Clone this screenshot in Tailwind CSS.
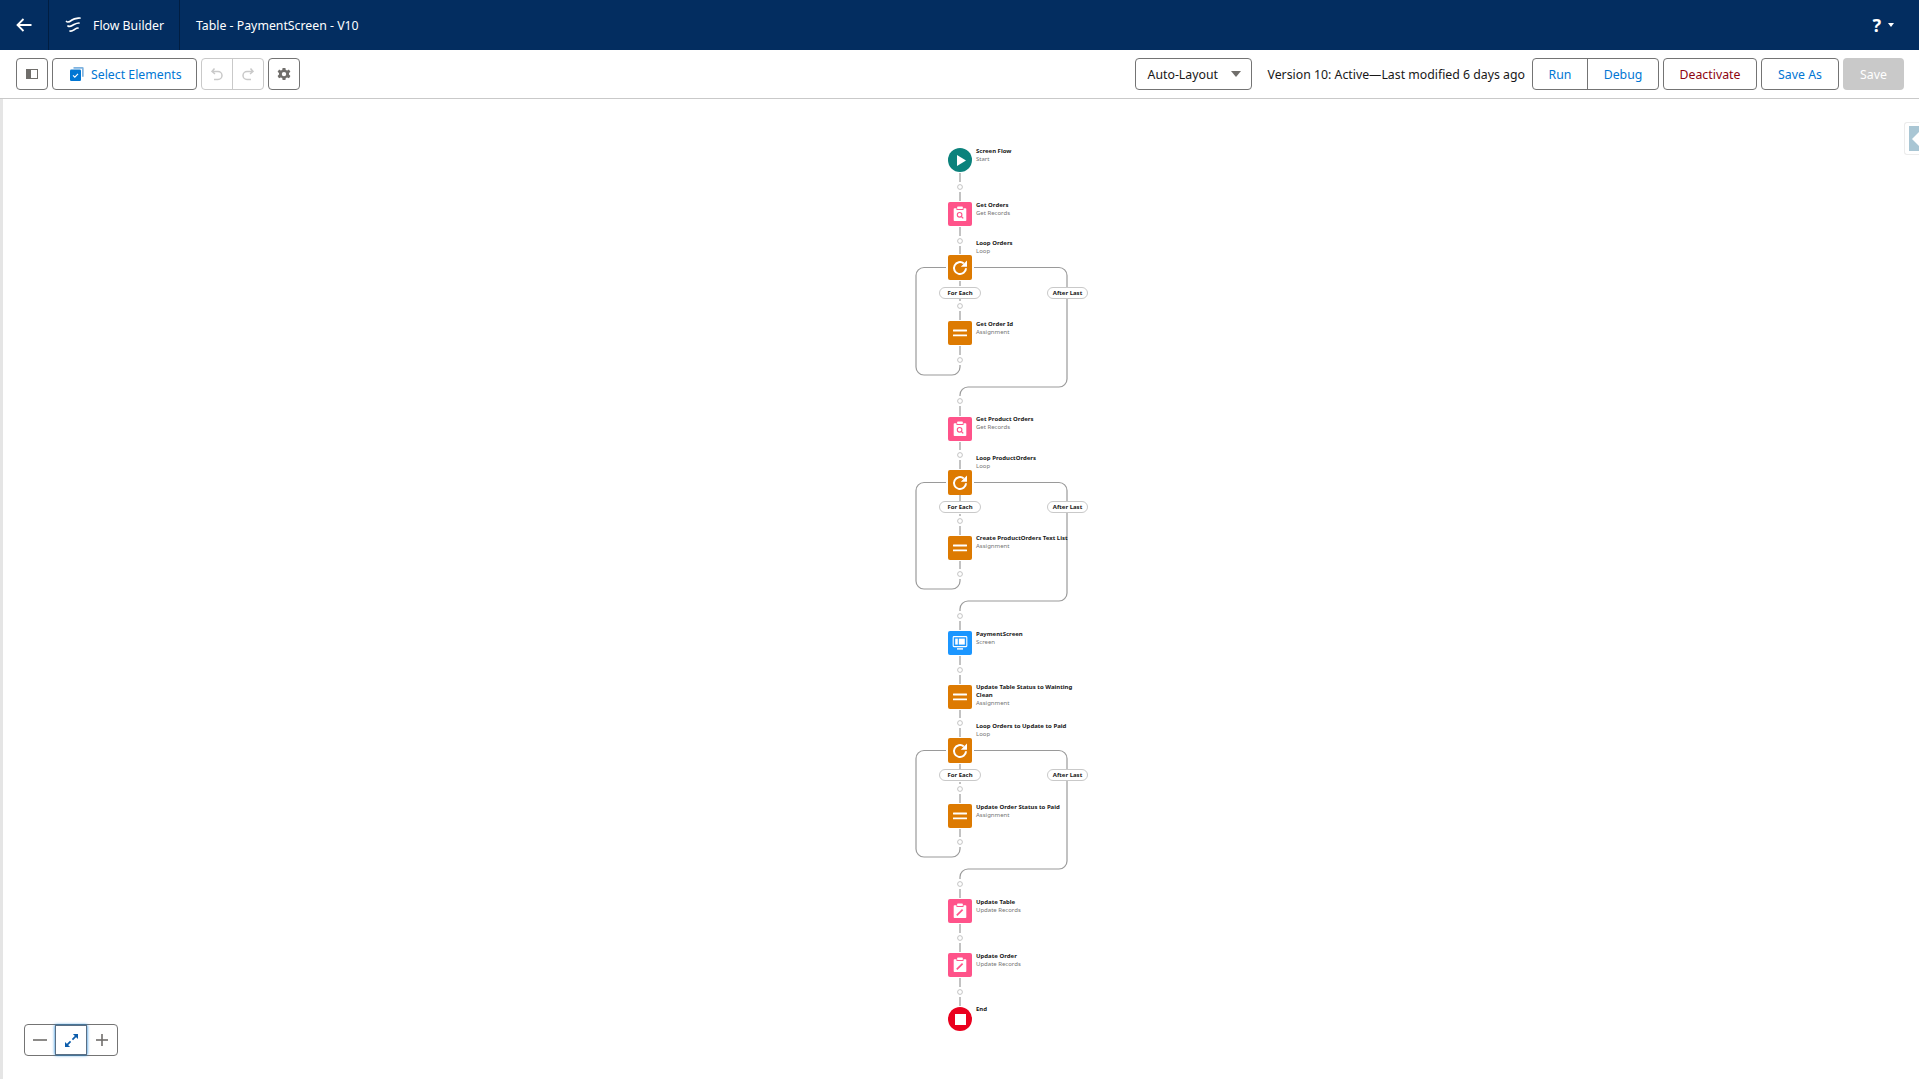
<!DOCTYPE html>
<html lang="en">

<head>
    <meta charset="UTF-8">
    <title>Flow Builder</title>
    <script src="https://cdn.jsdelivr.net/npm/@tailwindcss/browser@4"></script>
</head>

<body class="relative h-screen overflow-hidden bg-white font-['Noto_Sans',sans-serif] text-[12.3px] text-[#181818]">

    <!-- shared node icons -->
    <svg class="hidden">
        <symbol id="i-get" viewBox="0 0 16 16">
            <path fill="#fff" d="M2.5 2.2h2v1.8h7V2.200h2a.8.8 0 0 1 .8.8v11.200a.8.8 0 0 1-.8.8h-11a.8.8 0 0 1-.8-.8V3a.8.8 0 0 1 .8-.8z" />
            <rect fill="#fff" x="5.200" y=".6" width="5.600" height="2.500" rx=".6" />
            <circle cx="7.600" cy="8.800" r="2.300" fill="none" stroke="#ff538a" stroke-width="1.100" />
            <path stroke="#ff538a" stroke-width="1.300" d="M9.200 10.400l2 2" />
        </symbol>
        <symbol id="i-update" viewBox="0 0 16 16">
            <path fill="#fff" d="M2.5 2.2h2v1.8h7V2.200h2a.8.8 0 0 1 .8.8v11.200a.8.8 0 0 1-.8.8h-11a.8.8 0 0 1-.8-.8V3a.8.8 0 0 1 .8-.8z" />
            <rect fill="#fff" x="5.200" y=".6" width="5.600" height="2.500" rx=".6" />
            <path stroke="#ff538a" stroke-width="1.700" d="M4.800 12.400l5.800-5.800" />
        </symbol>
        <symbol id="i-loop" viewBox="0 0 16 16">
            <path fill="none" stroke="#fff" stroke-width="2" d="M14 8.200a6 6 0 1 1-2.200-4.800" />
            <path fill="#fff" d="M15 .6v6.200H8.800z" />
        </symbol>
        <symbol id="i-assign" viewBox="0 0 16 16">
            <rect fill="#fff" x="1" y="4.600" width="14" height="1.800" rx=".3" />
            <rect fill="#fff" x="1" y="9.400" width="14" height="1.800" rx=".3" />
        </symbol>
        <symbol id="i-screen" viewBox="0 0 16 16">
            <rect x="1.200" y="1.600" width="13.600" height="10" rx=".8" fill="none" stroke="#fff" stroke-width="1.100" />
            <rect x="3.200" y="3.600" width="2.600" height="6" fill="#fff" />
            <rect x="6.800" y="3.600" width="6" height="6" fill="#fff" />
            <rect x="5" y="13.200" width="6" height="1.400" fill="#fff" />
        </symbol>
    </svg>

    <!-- app header -->
    <header class="flex h-[50px] items-center bg-[#032d60] text-white">
        <div class="flex h-full w-[49px] items-center justify-center border-r border-[#011e42]">
            <svg class="h-[16px] w-[16px]" viewBox="0 0 16 16" fill="none" stroke="#fff" stroke-width="1.800">
                <path d="M15.500 8H1.500M7.500 2L1.500 8l6 6" />
            </svg>
        </div>
        <div class="flex h-full w-[131px] items-center border-r border-[#011e42] pl-[16px]">
            <svg class="h-[16px] w-[16px]" viewBox="0 0 16 16" fill="none" stroke="#fff" stroke-width="1.700" stroke-linecap="round">
                <path d="M1.500 4.500C3 6 5 4.500 7 3s4-1.500 8-2M3 9c2 1.500 4-.5 6-1.500s3-1.500 5-1.500M5 14c2 .5 3-.5 4.500-1.500s2-1.500 3.500-1.500" />
            </svg>
            <span class="ml-[12px] pt-[2px]">Flow Builder</span>
        </div>
        <div class="pl-[16px] pt-[2px]">Table - PaymentScreen - V10</div>
        <div class="ml-auto flex items-center pr-[25px]">
            <span class="text-[18px] font-bold">?</span>
            <span class="ml-[7px] h-0 w-0 border-x-[3.5px] border-t-[4px] border-x-transparent border-t-white"></span>
        </div>
    </header>

    <!-- toolbar -->
    <div class="flex h-[49px] items-center border-b border-[#c9c9c9] pl-[16px] pr-[15px]">
        <button class="flex h-[32px] w-[32px] items-center justify-center rounded-[4px] border border-[#747474]">
            <svg class="h-[12px] w-[12px]" viewBox="0 0 12 12">
                <rect x=".5" y="1.500" width="11" height="9" fill="none" stroke="#706e6b" />
                <rect x="1" y="2" width="4" height="8" fill="#706e6b" />
            </svg>
        </button>
        <button class="ml-[4px] flex h-[32px] w-[145px] items-center rounded-[4px] border border-[#747474] pl-[17px] text-[#0176d3]">
            <svg class="h-[14px] w-[14px]" viewBox="0 0 14 14">
                <path fill="#7fb3e0" d="M3.500 0h9a1.200 1.200 0 0 1 1.200 1.200v8.500H12V1.800H3.500z" />
                <rect y="2.600" width="11" height="11.400" rx="1.200" fill="#0176d3" />
                <path d="M3 8.400l1.800 1.800L8 6.800" fill="none" stroke="#fff" stroke-width="1.100" />
            </svg>
            <span class="ml-[7px] pt-[2px]">Select Elements</span>
        </button>
        <div class="ml-[4px] flex h-[32px] w-[63px] rounded-[4px] border border-[#c9c9c9]">
            <div class="flex w-[31px] items-center justify-center border-r border-[#c9c9c9]">
                <svg class="h-[14px] w-[14px]" viewBox="0 0 14 14" fill="none" stroke="#c9c9c9" stroke-width="1.500">
                    <path d="M4.500 1.500L2 4.500l3 2.500M2.500 4.500h5.500a4 4 0 0 1 0 8H4" />
                </svg>
            </div>
            <div class="flex flex-1 items-center justify-center">
                <svg class="h-[14px] w-[14px]" viewBox="0 0 14 14" fill="none" stroke="#c9c9c9" stroke-width="1.500">
                    <path d="M9.500 1.500l2.500 3-3 2.500M11.500 4.500H6a4 4 0 0 0 0 8h4" />
                </svg>
            </div>
        </div>
        <button class="ml-[4px] flex h-[32px] w-[32px] items-center justify-center rounded-[4px] border border-[#747474]">
            <svg class="h-[14px] w-[14px]" viewBox="0 0 14 14">
                <path fill="#706e6b" fill-rule="evenodd" d="M5.600 0h2.800l.4 1.900 1.400.6 1.700-1 1.500 2.200-1.400 1.300v1.600L13.400 8 12 10.300l-1.800-.9-1.400.7-.4 1.900H5.600l-.4-1.900-1.400-.7-1.800.9L.6 8 2 6.600V5L.6 3.700 2.100 1.500l1.700 1 1.400-.6zM7 3.900a2.200 2.200 0 1 0 0 4.400 2.200 2.200 0 0 0 0-4.400z" transform="translate(0 1)" />
            </svg>
        </button>

        <button class="ml-auto flex h-[32px] w-[117px] items-center rounded-[4px] border border-[#747474] pl-[12px]">
            <span class="pt-[2px]">Auto-Layout</span>
            <span class="ml-[13px] h-0 w-0 border-x-[5px] border-t-[6px] border-x-transparent border-t-[#706e6b]"></span>
        </button>
        <span class="ml-[16px] pt-[2px]">Version 10: Active—Last modified 6 days ago</span>
        <div class="ml-[7px] flex h-[32px] w-[127px] rounded-[4px] border border-[#747474] text-[#0176d3]">
            <div class="flex w-[55px] items-center justify-center border-r border-[#747474] pt-[2px]">Run</div>
            <div class="flex flex-1 items-center justify-center pt-[2px]">Debug</div>
        </div>
        <button class="ml-[4px] h-[32px] w-[94px] rounded-[4px] border border-[#747474] pt-[2px] text-[#8e030f]">Deactivate</button>
        <button class="ml-[4px] h-[32px] w-[78px] rounded-[4px] border border-[#747474] pt-[2px] text-[#0176d3]">Save As</button>
        <button class="ml-[4px] h-[32px] w-[61px] rounded-[4px] bg-[#c9c9c9] pt-[2px] text-white">Save</button>
    </div>

    <!-- free canvas: everything below is placed in page coordinates -->
    <div class="absolute inset-0">
        <div class="absolute bottom-0 left-0 top-[99px] w-[3px] bg-[#e5e5e5]"></div>

        <svg class="absolute left-0 top-0 h-[1079px] w-[1919px]" viewBox="0 0 1919 1079" fill="none">
            <g stroke="#c2c2c2" stroke-width="2">
                <path d="M960 173v9M960 192v9" />
                <path d="M960 227v9M960 246v8" />
                <path d="M960 281v5M960 299v2M960 311v9" />
                <path d="M960 346v9" />
                <path d="M960 406v10" />
                <path d="M960 442v8M960 460v9" />
                <path d="M960 495v6M960 514v2M960 526v9" />
                <path d="M960 561v8" />
                <path d="M960 621v9" />
                <path d="M960 656v9M960 675v9" />
                <path d="M960 710v8M960 728v9" />
                <path d="M960 764v5M960 782v2M960 794v9" />
                <path d="M960 829v8" />
                <path d="M960 889v9" />
                <path d="M960 924v9M960 943v9" />
                <path d="M960 978v9M960 997v9" />
            </g>
            <g stroke="#9a9a9a" stroke-width="1.200">
                <path d="M946 267.500h-22a8 8 0 0 0-8 8V367a8 8 0 0 0 8 8h28a8 8 0 0 0 8-8v-2" />
                <path d="M974 267.500h85a8 8 0 0 1 8 8V379a8 8 0 0 1-8 8h-91a8 8 0 0 0-8 8v1" />
                <path d="M946 482.500h-22a8 8 0 0 0-8 8V581a8 8 0 0 0 8 8h28a8 8 0 0 0 8-8v-2" />
                <path d="M974 482.500h85a8 8 0 0 1 8 8V593a8 8 0 0 1-8 8h-91a8 8 0 0 0-8 8v2" />
                <path d="M946 750.500h-22a8 8 0 0 0-8 8V849a8 8 0 0 0 8 8h28a8 8 0 0 0 8-8v-2" />
                <path d="M974 750.500h85a8 8 0 0 1 8 8V861a8 8 0 0 1-8 8h-91a8 8 0 0 0-8 8v2" />
            </g>
            <!-- connector dots -->
            <g fill="#fff" stroke="#b5b5b5" stroke-width=".8">
                <circle cx="960" cy="187" r="2.400" />
                <circle cx="960" cy="241" r="2.400" />
                <circle cx="960" cy="306" r="2.400" />
                <circle cx="960" cy="360" r="2.400" />
                <circle cx="960" cy="401" r="2.400" />
                <circle cx="960" cy="455" r="2.400" />
                <circle cx="960" cy="521" r="2.400" />
                <circle cx="960" cy="574" r="2.400" />
                <circle cx="960" cy="616" r="2.400" />
                <circle cx="960" cy="670" r="2.400" />
                <circle cx="960" cy="723" r="2.400" />
                <circle cx="960" cy="789" r="2.400" />
                <circle cx="960" cy="842" r="2.400" />
                <circle cx="960" cy="884" r="2.400" />
                <circle cx="960" cy="938" r="2.400" />
                <circle cx="960" cy="992" r="2.400" />
            </g>
        </svg>

        <!-- nodes -->
        <div class="absolute left-[948px] top-[148px] flex h-[24px] w-[24px] items-center justify-center rounded-full bg-[#0b827c]">
            <svg class="ml-[2px] h-[11px] w-[9px]" viewBox="0 0 9 11"><path fill="#fff" d="M0 0l9 5.500-9 5.500z" /></svg>
        </div>
        <div class="absolute left-[948px] top-[202px] flex h-[24px] w-[24px] items-center justify-center rounded-[2px] bg-[#ff538a]"><svg class="h-[16px] w-[16px]"><use href="#i-get" /></svg></div>
        <div class="absolute left-[948px] top-[255px] flex h-[25px] w-[24px] items-center justify-center rounded-[2px] bg-[#dd7a01]"><svg class="h-[16px] w-[16px]"><use href="#i-loop" /></svg></div>
        <div class="absolute left-[948px] top-[321px] flex h-[24px] w-[24px] items-center justify-center rounded-[2px] bg-[#dd7a01]"><svg class="h-[16px] w-[16px]"><use href="#i-assign" /></svg></div>
        <div class="absolute left-[948px] top-[417px] flex h-[24px] w-[24px] items-center justify-center rounded-[2px] bg-[#ff538a]"><svg class="h-[16px] w-[16px]"><use href="#i-get" /></svg></div>
        <div class="absolute left-[948px] top-[470px] flex h-[25px] w-[24px] items-center justify-center rounded-[2px] bg-[#dd7a01]"><svg class="h-[16px] w-[16px]"><use href="#i-loop" /></svg></div>
        <div class="absolute left-[948px] top-[536px] flex h-[24px] w-[24px] items-center justify-center rounded-[2px] bg-[#dd7a01]"><svg class="h-[16px] w-[16px]"><use href="#i-assign" /></svg></div>
        <div class="absolute left-[948px] top-[631px] flex h-[24px] w-[24px] items-center justify-center rounded-[2px] bg-[#1b96ff]"><svg class="h-[16px] w-[16px]"><use href="#i-screen" /></svg></div>
        <div class="absolute left-[948px] top-[685px] flex h-[24px] w-[24px] items-center justify-center rounded-[2px] bg-[#dd7a01]"><svg class="h-[16px] w-[16px]"><use href="#i-assign" /></svg></div>
        <div class="absolute left-[948px] top-[738px] flex h-[25px] w-[24px] items-center justify-center rounded-[2px] bg-[#dd7a01]"><svg class="h-[16px] w-[16px]"><use href="#i-loop" /></svg></div>
        <div class="absolute left-[948px] top-[804px] flex h-[24px] w-[24px] items-center justify-center rounded-[2px] bg-[#dd7a01]"><svg class="h-[16px] w-[16px]"><use href="#i-assign" /></svg></div>
        <div class="absolute left-[948px] top-[899px] flex h-[24px] w-[24px] items-center justify-center rounded-[2px] bg-[#ff538a]"><svg class="h-[16px] w-[16px]"><use href="#i-update" /></svg></div>
        <div class="absolute left-[948px] top-[953px] flex h-[24px] w-[24px] items-center justify-center rounded-[2px] bg-[#ff538a]"><svg class="h-[16px] w-[16px]"><use href="#i-update" /></svg></div>
        <div class="absolute left-[948px] top-[1007px] flex h-[24px] w-[24px] items-center justify-center rounded-full bg-[#ea001e]"><div class="h-[11px] w-[11px] bg-white"></div></div>

        <!-- node labels -->
        <div class="absolute left-[976px] top-[147px] text-[6px] leading-[8px]"><div class="font-bold">Screen Flow</div><div class="text-[#747474]">Start</div></div>
        <div class="absolute left-[976px] top-[201px] text-[6px] leading-[8px]"><div class="font-bold">Get Orders</div><div class="text-[#747474]">Get Records</div></div>
        <div class="absolute left-[976px] top-[239px] text-[6px] leading-[8px]"><div class="font-bold">Loop Orders</div><div class="text-[#747474]">Loop</div></div>
        <div class="absolute left-[976px] top-[320px] text-[6px] leading-[8px]"><div class="font-bold">Get Order Id</div><div class="text-[#747474]">Assignment</div></div>
        <div class="absolute left-[976px] top-[415px] text-[6px] leading-[8px]"><div class="font-bold">Get Product Orders</div><div class="text-[#747474]">Get Records</div></div>
        <div class="absolute left-[976px] top-[454px] text-[6px] leading-[8px]"><div class="font-bold">Loop ProductOrders</div><div class="text-[#747474]">Loop</div></div>
        <div class="absolute left-[976px] top-[534px] text-[6px] leading-[8px]"><div class="font-bold">Create ProductOrders Text List</div><div class="text-[#747474]">Assignment</div></div>
        <div class="absolute left-[976px] top-[630px] text-[6px] leading-[8px]"><div class="font-bold">PaymentScreen</div><div class="text-[#747474]">Screen</div></div>
        <div class="absolute left-[976px] top-[683px] w-[104px] text-[6px] leading-[8px]"><div class="font-bold">Update Table Status to Wainting Clean</div><div class="text-[#747474]">Assignment</div></div>
        <div class="absolute left-[976px] top-[722px] text-[6px] leading-[8px]"><div class="font-bold">Loop Orders to Update to Paid</div><div class="text-[#747474]">Loop</div></div>
        <div class="absolute left-[976px] top-[803px] text-[6px] leading-[8px]"><div class="font-bold">Update Order Status to Paid</div><div class="text-[#747474]">Assignment</div></div>
        <div class="absolute left-[976px] top-[898px] text-[6px] leading-[8px]"><div class="font-bold">Update Table</div><div class="text-[#747474]">Update Records</div></div>
        <div class="absolute left-[976px] top-[952px] text-[6px] leading-[8px]"><div class="font-bold">Update Order</div><div class="text-[#747474]">Update Records</div></div>
        <div class="absolute left-[976px] top-[1005px] text-[6px] leading-[8px] font-bold">End</div>

        <!-- branch pills -->
        <div class="absolute left-[939px] top-[287px] flex h-[12px] w-[42px] items-center justify-center rounded-full border border-[#c9c9c9] bg-white text-[6px] font-bold">For Each</div>
        <div class="absolute left-[1047px] top-[287px] flex h-[12px] w-[41px] items-center justify-center rounded-full border border-[#c9c9c9] bg-white text-[6px] font-bold">After Last</div>
        <div class="absolute left-[939px] top-[501px] flex h-[12px] w-[42px] items-center justify-center rounded-full border border-[#c9c9c9] bg-white text-[6px] font-bold">For Each</div>
        <div class="absolute left-[1047px] top-[501px] flex h-[12px] w-[41px] items-center justify-center rounded-full border border-[#c9c9c9] bg-white text-[6px] font-bold">After Last</div>
        <div class="absolute left-[939px] top-[769px] flex h-[12px] w-[42px] items-center justify-center rounded-full border border-[#c9c9c9] bg-white text-[6px] font-bold">For Each</div>
        <div class="absolute left-[1047px] top-[769px] flex h-[12px] w-[41px] items-center justify-center rounded-full border border-[#c9c9c9] bg-white text-[6px] font-bold">After Last</div>

        <!-- side panel toggle -->
        <div class="absolute left-[1904px] top-[122px] flex h-[33px] w-[15px] items-center rounded-l-[3px] border border-r-0 border-[#ececec] pl-[4px]">
            <div class="flex h-[25px] w-[10px] items-center justify-end bg-[#a9c6d4]">
                <span class="h-0 w-0 border-y-[7px] border-r-[7px] border-y-transparent border-r-white"></span>
            </div>
        </div>

        <!-- zoom controls -->
        <div class="absolute left-[24px] top-[1024px] flex h-[32px] w-[94px] rounded-[4px] border border-[#747474] bg-white">
            <div class="flex w-[30px] items-center justify-center">
                <svg class="h-[14px] w-[14px]" viewBox="0 0 14 14"><rect y="6.200" width="14" height="1.600" fill="#706e6b" /></svg>
            </div>
            <div class="flex w-[32px] items-center justify-center border border-[#5a6f85] shadow-[0_0_3px_#0176d3]">
                <svg class="h-[13px] w-[13px]" viewBox="0 0 14 14" fill="none" stroke="#0b5cab" stroke-width="1.800">
                    <path d="M1.500 12.500L6 8M8 6l4.500-4.500" />
                    <path fill="#0b5cab" stroke="none" d="M0 14V8.500L5.500 14zM14 0v5.500L8.500 0z" />
                </svg>
            </div>
            <div class="flex flex-1 items-center justify-center">
                <svg class="h-[12px] w-[12px]" viewBox="0 0 12 12" fill="#706e6b"><rect y="5.200" width="12" height="1.600" /><rect x="5.200" width="1.600" height="12" /></svg>
            </div>
        </div>
    </div>

</body>

</html>
